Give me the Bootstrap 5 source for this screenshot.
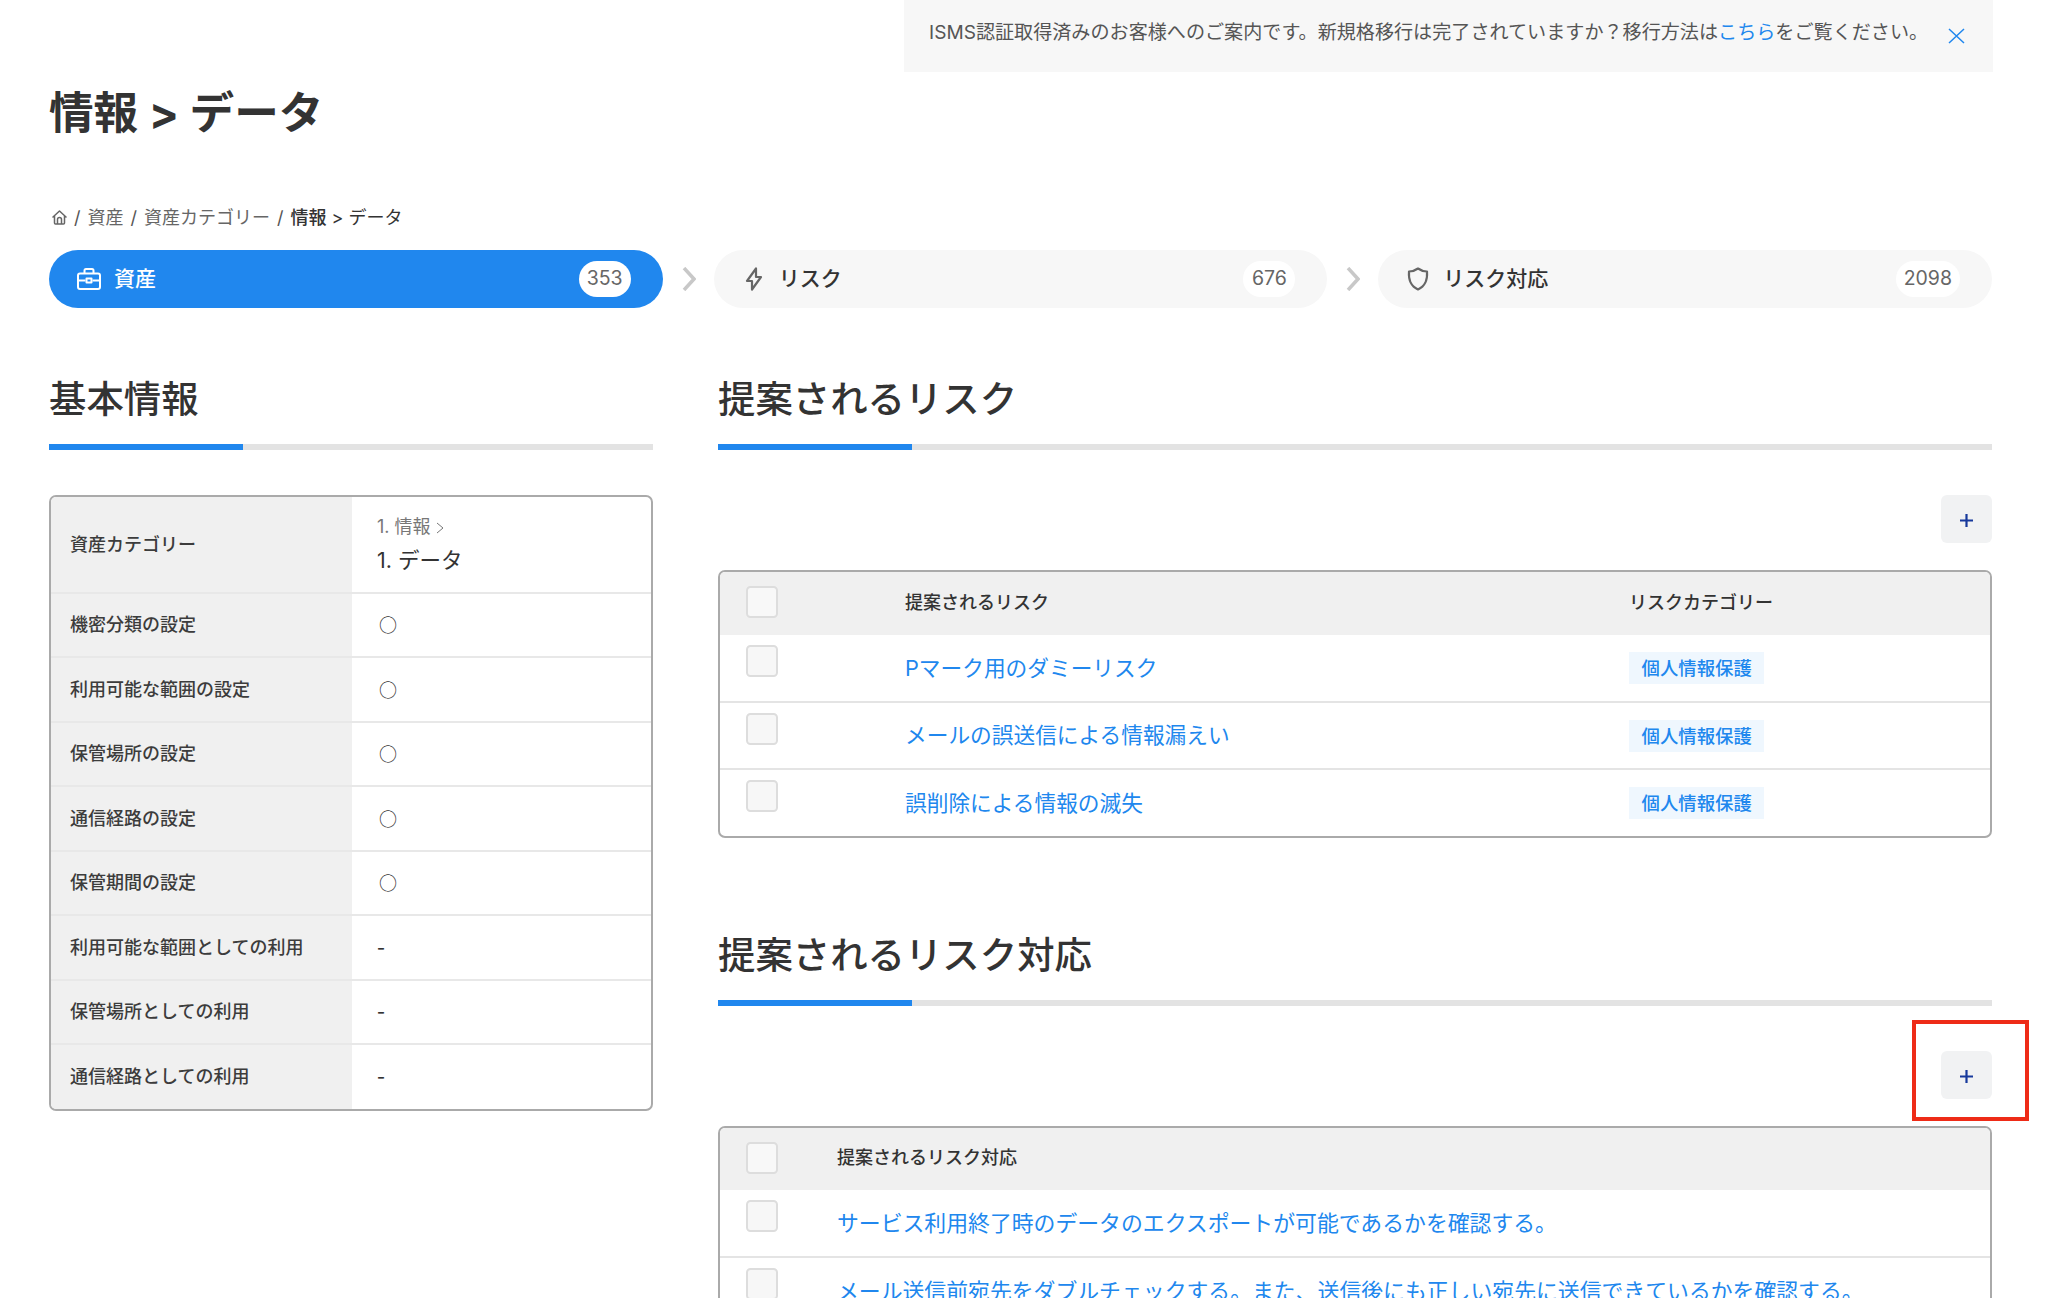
<!DOCTYPE html>
<html lang="ja"><head><meta charset="utf-8"><title>情報 > データ</title>
<link href="https://cdn.jsdelivr.net/npm/bootstrap@5.3.0/dist/css/bootstrap.min.css" rel="stylesheet">
<style>
html,body{height:1298px;overflow:hidden;background:#fff}
body{font-family:Inter,"Noto Sans CJK JP",sans-serif;color:#333;font-size:18px}
.page{padding:0 56px 0 49px}
.notice{width:1089px;height:72px;background:#f7f7f7;padding:21px 28px 0 25px;font-size:19.1px;line-height:22px;color:#555;margin-right:-1px}
.notice a{color:#2087ee;text-decoration:none}
.notice-x{margin-top:7px}
.title{font-size:44.6px;line-height:54px;font-weight:700;margin:14px 0 64px;color:#333}
.crumbs{--bs-breadcrumb-margin-bottom:19px;--bs-breadcrumb-divider-color:#555;--bs-breadcrumb-item-padding-x:7px;--bs-breadcrumb-item-active-color:#333;font-size:18px;line-height:27px;color:#666;padding-left:3px}
.crumbs a{color:#666;text-decoration:none}
.crumbs b{font-weight:500}
.pills{gap:51px;margin-bottom:69px}
.step{flex:1 1 0;height:58px;border-radius:29px;background:#f7f7f7;color:#333;padding:0 32px 0 28px;font-size:21px;font-weight:500;position:relative}
.step-on{background:#2087ee;color:#fff}
.step svg.ic{width:24px;height:24px;margin-right:13px}
.count{height:36px;min-width:52px;padding:0 8px;border-radius:18px;background:#fff;color:#666;font-size:19.5px;font-weight:400}
.chev{position:absolute;right:-33px;top:17px;width:14px;height:24px}
.cols{gap:65px}
.col-l{width:604px}
.col-r{width:1274px}
.head2{font-size:37.4px;line-height:46px;font-weight:500;margin:0;padding-bottom:21px;color:#333}
.track{height:6px;background:#e3e3e3;margin-bottom:45px}
.fill{width:194px;height:6px;background:#2087ee}
.box{border:2px solid #aaa;border-radius:7px;overflow:hidden;background:#fff}
.info{table-layout:fixed;width:100%;margin:0;border-collapse:collapse}
.info th{width:301px;background:#f0f0f0;font-weight:500;font-size:18px;padding:0 0 0 19px;color:#3c3c3c;vertical-align:middle}
.info td{padding:0 0 0 25px;vertical-align:middle;font-size:18px;color:#333;font-family:"Noto Sans CJK JP",sans-serif}
.info tr{height:64.5px;border-bottom:2px solid #e8e8e8}
.info tr:last-child{border-bottom:0}
.info tr.tall{height:95.5px}
.info .maru{padding-left:2px}
.info .dashv{font-size:23px;color:#333;line-height:1}
.parent{font-size:18px;line-height:24px;color:#777;margin-bottom:7px;font-family:Inter,"Noto Sans CJK JP",sans-serif}
.child{font-size:21.5px;line-height:28px;color:#333;font-family:Inter,"Noto Sans CJK JP",sans-serif}
.add{width:51px;height:48px;background:#f1f2f3;border:0;border-radius:6px;padding:0}
.add-wrap{margin-bottom:27px;position:relative}
.mark-box{position:absolute;left:-29px;right:-37px;top:-31px;bottom:-22px;border:4px solid #ee2b17;pointer-events:none}
.grid-t{table-layout:fixed;width:100%;margin:0;border-collapse:collapse}
.grid-t thead tr{height:63px;background:#f0f0f0}
.t2 thead tr{height:62px}
.grid-t th{font-size:18px;font-weight:500;color:#333;vertical-align:middle;padding:0 0 3px}
.grid-t tbody tr{height:67px;border-top:2px solid #e4e4e4}
.grid-t tbody tr:first-child{border-top:0}
.grid-t td{padding:0;vertical-align:middle}
.grid-t .c0{width:185px;padding-left:26px}
.t2 .c0{width:117px}
.grid-t .c2{width:361px}
.grid-t td.c0{vertical-align:top;padding-top:10px}
.tick{width:32px;height:32px;margin:0;display:block;background-color:#f7f7f7;border:2px solid #ddd;border-radius:4px}
thead .tick{background-color:#f8f8f8}
.grid-t a{font-size:21.7px;color:#2087ee;text-decoration:none;font-weight:400}
.t2 a{font-size:21.85px}
.tagx{display:inline-block;background:#eff7fe;color:#2087ee;font-size:18.4px;line-height:32px;padding:0 12.500px;font-weight:500}
.sec2{margin-top:95px}
.t2-wrap{border-bottom:0;border-radius:7px 7px 0 0}
</style></head><body>
<div class="page">
<div class="d-flex justify-content-end"><div class="notice d-flex justify-content-between align-items-start">
<span>ISMS認証取得済みのお客様へのご案内です。新規格移行は完了されていますか？移行方法は<a href="#">こちら</a>をご覧ください。</span>
<svg class="notice-x" width="17" height="16" viewBox="0 0 17 16" fill="none" stroke="#2087ee" stroke-width="1.5"><path d="M1 1l15 14M16 1L1 15"/></svg>
</div></div>
<h1 class="title">情報 &gt; データ</h1>
<nav aria-label="breadcrumb"><ol class="breadcrumb crumbs">
<li class="breadcrumb-item d-flex align-items-center"><a href="#" class="d-flex"><svg width="15" height="15" viewBox="0 0 15 15" fill="none" stroke="#666" stroke-width="1.5" stroke-linejoin="round" stroke-linecap="round"><path d="M1 7L7.500 1 14 7M2.500 6v7a1 1 0 0 0 1 1h8a1 1 0 0 0 1-1V6M5.500 14V9.500a2 2 0 0 1 4 0V14"/></svg></a></li>
<li class="breadcrumb-item"><a href="#">資産</a></li>
<li class="breadcrumb-item"><a href="#">資産カテゴリー</a></li>
<li class="breadcrumb-item active"><b>情報</b> &gt; データ</li>
</ol></nav>
<div class="d-flex pills">
<div class="step step-on d-flex align-items-center">
<svg class="ic" viewBox="0 0 24 24" fill="none" stroke="#fff" stroke-width="2" stroke-linejoin="round"><rect x="1" y="6.500" width="22" height="15.500" rx="2"/><path d="M7.500 6.500V3.500A1.500 1.500 0 0 1 9 2h6a1.500 1.500 0 0 1 1.500 1.500V6.500M1 13.500h7.500M15.500 13.500H23"/><rect x="9.500" y="11.500" width="5" height="4"/></svg>
<span class="flex-grow-1">資産</span><span class="count d-flex align-items-center justify-content-center">353</span>
<svg class="chev" viewBox="0 0 14 24" fill="none" stroke="#c8c8c8" stroke-width="3.500"><path d="M2 1l10 11L2 23"/></svg>
</div>
<div class="step d-flex align-items-center">
<svg class="ic" viewBox="0 0 24 24" fill="none" stroke="#666" stroke-width="2.200" stroke-linejoin="round"><path d="M14 1.500v8.500h5L10 22.500v-8.500H5z"/></svg>
<span class="flex-grow-1">リスク</span><span class="count d-flex align-items-center justify-content-center">676</span>
<svg class="chev" viewBox="0 0 14 24" fill="none" stroke="#c8c8c8" stroke-width="3.500"><path d="M2 1l10 11L2 23"/></svg>
</div>
<div class="step d-flex align-items-center">
<svg class="ic" viewBox="0 0 24 24" fill="none" stroke="#666" stroke-width="2.200" stroke-linejoin="round"><path d="M12 1.500c2.800 2 5.800 3 9 3 .6 8-1 14-9 18-8-4-9.600-10-9-18 3.200 0 6.200-1 9-3z"/></svg>
<span class="flex-grow-1">リスク対応</span><span class="count d-flex align-items-center justify-content-center">2098</span>
</div>
</div>
<div class="d-flex cols align-items-start">
<div class="col-l">
<h2 class="head2">基本情報</h2><div class="track"><div class="fill"></div></div>
<div class="box"><table class="info"><tbody>
<tr class="tall"><th>資産カテゴリー</th><td><div class="parent">1. 情報 <svg width="8" height="12" viewBox="0 0 8 12" fill="none" stroke="#777" stroke-width="1"><path d="M1 1l6 5-6 5"/></svg></div><div class="child">1. データ</div></td></tr>
<tr><th>機密分類の設定</th><td><span class="maru">○</span></td></tr>
<tr><th>利用可能な範囲の設定</th><td><span class="maru">○</span></td></tr>
<tr><th>保管場所の設定</th><td><span class="maru">○</span></td></tr>
<tr><th>通信経路の設定</th><td><span class="maru">○</span></td></tr>
<tr><th>保管期間の設定</th><td><span class="maru">○</span></td></tr>
<tr><th>利用可能な範囲としての利用</th><td><span class="dashv">-</span></td></tr>
<tr><th>保管場所としての利用</th><td><span class="dashv">-</span></td></tr>
<tr><th>通信経路としての利用</th><td><span class="dashv">-</span></td></tr>
</tbody></table></div>
</div>
<div class="col-r">
<h2 class="head2">提案されるリスク</h2><div class="track"><div class="fill"></div></div>
<div class="add-wrap d-flex justify-content-end"><button class="add btn" type="button" aria-label="追加"><svg width="13" height="13" viewBox="0 0 13 13" stroke="#17399c" stroke-width="2.200"><path d="M6.500 0v13M0 6.500h13"/></svg></button></div>
<div class="box"><table class="grid-t"><thead><tr><th class="c0"><input class="form-check-input tick" type="checkbox" aria-label="全選択"></th><th>提案されるリスク</th><th class="c2">リスクカテゴリー</th></tr></thead><tbody>
<tr><td class="c0"><input class="form-check-input tick" type="checkbox" aria-label="選択"></td><td><a href="#">Pマーク用のダミーリスク</a></td><td><span class="tagx">個人情報保護</span></td></tr>
<tr><td class="c0"><input class="form-check-input tick" type="checkbox" aria-label="選択"></td><td><a href="#">メールの誤送信による情報漏えい</a></td><td><span class="tagx">個人情報保護</span></td></tr>
<tr><td class="c0"><input class="form-check-input tick" type="checkbox" aria-label="選択"></td><td><a href="#">誤削除による情報の滅失</a></td><td><span class="tagx">個人情報保護</span></td></tr>
</tbody></table></div>
<div class="sec2">
<h2 class="head2">提案されるリスク対応</h2><div class="track"><div class="fill"></div></div>
<div class="add-wrap d-flex justify-content-end"><div class="position-relative d-flex"><button class="add btn" type="button" aria-label="追加"><svg width="13" height="13" viewBox="0 0 13 13" stroke="#17399c" stroke-width="2.200"><path d="M6.500 0v13M0 6.500h13"/></svg></button><div class="mark-box"></div></div></div>
<div class="box t2-wrap"><table class="grid-t t2"><thead><tr><th class="c0"><input class="form-check-input tick" type="checkbox" aria-label="全選択"></th><th>提案されるリスク対応</th></tr></thead><tbody>
<tr><td class="c0"><input class="form-check-input tick" type="checkbox" aria-label="選択"></td><td><a href="#">サービス利用終了時のデータのエクスポートが可能であるかを確認する。</a></td></tr>
<tr><td class="c0"><input class="form-check-input tick" type="checkbox" aria-label="選択"></td><td><a href="#">メール送信前宛先をダブルチェックする。また、送信後にも正しい宛先に送信できているかを確認する。</a></td></tr>
</tbody></table></div>
</div>
</div>
</div>
</div>
<script src="https://cdn.jsdelivr.net/npm/bootstrap@5.3.0/dist/js/bootstrap.bundle.min.js"></script>
</body></html>
